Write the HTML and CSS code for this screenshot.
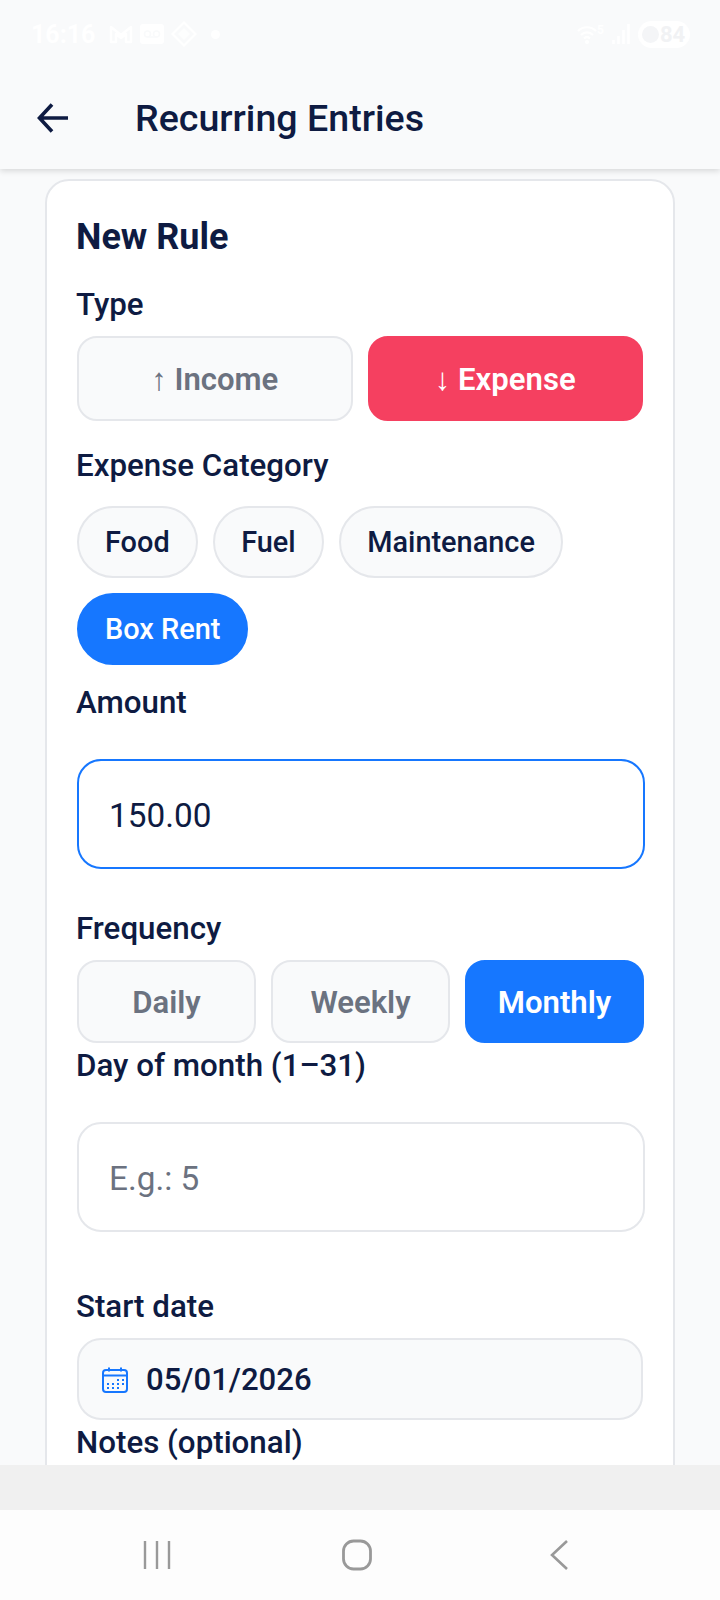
FILE: index.html
```html
<!DOCTYPE html>
<html lang="en">
<head>
    <meta charset="UTF-8">
    <meta name="viewport" content="width=device-width, initial-scale=1.0">
    <link rel="stylesheet" href="styles.css">
    <title>Recurring Entries</title>
</head>
<body>
    <div class="app">
        <header class="topbar">
            <div class="status">
                <div class="status-left">
                    <span class="clock">16:16</span>
                    <svg width="24" height="20" viewBox="0 0 24 20"><path d="M2 18V3l10 8 10-8v15h-5V10l-5 4-5-4v8z" fill="none" stroke="#fff" stroke-width="2.400" stroke-linejoin="round"/></svg>
                    <svg width="24" height="20" viewBox="0 0 24 20"><rect width="24" height="20" rx="3" fill="#fff"/><circle cx="7.500" cy="10" r="3" fill="none" stroke="#f9fafb" stroke-width="1.600"/><circle cx="16.500" cy="10" r="3" fill="none" stroke="#f9fafb" stroke-width="1.600"/><path d="M7.500 13h9" stroke="#f9fafb" stroke-width="1.600"/></svg>
                    <svg width="26" height="26" viewBox="0 0 26 26"><path d="M13 1.500 24.500 13 13 24.500 1.500 13z" fill="none" stroke="#fff" stroke-width="2.200"/><path d="M13 7l6 6-6 6-6-6z" fill="#fff" opacity="0.7"/></svg>
                    <span class="dot"></span>
                </div>
                <div class="status-right">
                    <span class="wifi">
                        <svg width="20" height="20" viewBox="0 0 20 20"><path d="M1 7c5-5 13-5 18 0M4 11c3.500-3.500 8.500-3.500 12 0M7 14.500c2-2 4-2 6 0" fill="none" stroke="#fff" stroke-width="2.200"/><circle cx="10" cy="18" r="2" fill="#fff"/></svg>
                        <span class="wifi-band">5</span>
                    </span>
                    <svg width="18" height="20" viewBox="0 0 18 20"><path d="M1.500 20v-4M6.500 20v-8M11.500 20V6M16.500 20V0" stroke="#fff" stroke-width="2.600"/></svg>
                    <span class="battery"><span class="battery-dot"></span>84</span>
                </div>
            </div>
            <div class="titlebar">
                <svg width="32" height="30" viewBox="0 0 32 30"><path d="M15 1.500 2.500 15 15 28.500M3 15H31" fill="none" stroke="#0e1b42" stroke-width="3.600"/></svg>
                <h1 class="title">Recurring Entries</h1>
            </div>
        </header>

        <main class="content">
            <section class="card">
                <h2 class="card-title">New Rule</h2>

                <div class="label label-type">Type</div>
                <div class="seg seg-type">
                    <button class="seg-btn">↑ Income</button>
                    <button class="seg-btn seg-red">↓ Expense</button>
                </div>

                <div class="label label-cat">Expense Category</div>
                <div class="chips">
                    <button class="chip">Food</button>
                    <button class="chip">Fuel</button>
                    <button class="chip">Maintenance</button>
                    <button class="chip chip-on">Box Rent</button>
                </div>

                <div class="label label-amount">Amount</div>
                <input class="field field-focus" value="150.00">

                <div class="label label-freq">Frequency</div>
                <div class="seg seg-freq">
                    <button class="seg-btn">Daily</button>
                    <button class="seg-btn">Weekly</button>
                    <button class="seg-btn seg-blue">Monthly</button>
                </div>

                <div class="label">Day of month (1–31)</div>
                <input class="field" placeholder="E.g.: 5">

                <div class="label label-start">Start date</div>
                <div class="date">
                    <svg width="26" height="26" viewBox="0 0 26 26"><rect x="1" y="3" width="24" height="22" rx="3" fill="none" stroke="#1677ff" stroke-width="2"/><path d="M1 8.500h24M7 0.500v4M19 0.500v4" stroke="#1677ff" stroke-width="2"/><path d="M15 13h2M20 13h2M5 17h2M10 17h2M15 17h2M20 17h2M5 21h2M10 21h2M15 21h2" stroke="#1677ff" stroke-width="2.200"/></svg>
                    <span>05/01/2026</span>
                </div>

                <div class="label">Notes (optional)</div>
                <input class="field">
            </section>
        </main>

        <div class="strip"></div>
        <nav class="navbar">
            <svg width="28" height="30" viewBox="0 0 28 30"><path d="M2 1v28M14 1v28M26 1v28" stroke="#999" stroke-width="2.400"/></svg>
            <svg class="nav-home" width="30" height="32" viewBox="0 0 30 32"><rect x="1.500" y="2" width="27" height="28" rx="10" fill="none" stroke="#999" stroke-width="2.800"/></svg>
            <svg width="20" height="32" viewBox="0 0 20 32"><path d="M18 2 3 16l15 14" fill="none" stroke="#999" stroke-width="2.600"/></svg>
        </nav>
    </div>
</body>
</html>
```

FILE: styles.css
```css
* {
    box-sizing: border-box;
}

body {
    margin: 0;
    font-family: Roboto, "Noto Sans", sans-serif;
    color: #0e1b42;
}

.app {
    display: flex;
    flex-direction: column;
    width: 720px;
    height: 1600px;
    background-color: #f9fafb;
    overflow: hidden;
}

/* top area */
.topbar {
    position: relative;
    z-index: 2;
    height: 169px;
    flex-shrink: 0;
    background-color: #f9fafb;
    box-shadow: 0 2px 6px rgba(0, 0, 0, 0.14);
}

.status {
    display: flex;
    justify-content: space-between;
    align-items: center;
    height: 68px;
    padding: 0 30px 0 31px;
}

.status-left,
.status-right {
    display: flex;
    align-items: center;
    gap: 7px;
}

.clock {
    font-size: 25px;
    font-weight: 700;
    color: #fff;
    margin-right: 7px;
}

.dot {
    width: 9px;
    height: 9px;
    margin-left: 7px;
    border-radius: 50%;
    background-color: #fff;
}

.wifi {
    display: flex;
    align-items: flex-start;
    width: 28px;
}

.wifi-band {
    font-size: 12px;
    line-height: 12px;
    font-weight: 700;
    color: #fff;
}

.battery {
    display: flex;
    align-items: center;
    gap: 1px;
    width: 52px;
    height: 27px;
    margin-left: 1px;
    padding-left: 4px;
    border-radius: 14px;
    background-color: #fff;
    color: #f1f2f4;
    font-size: 22px;
    font-weight: 700;
}

.battery-dot {
    width: 17px;
    height: 17px;
    border-radius: 50%;
    background-color: #f4f5f7;
}

.titlebar {
    display: flex;
    align-items: center;
    height: 99px;
    padding-left: 37px;
}

.title {
    margin: 0 0 0 66px;
    font-size: 37.600px;
    font-weight: 500;
}

/* form card, cut off by the bottom strip */
.content {
    flex: 1;
    min-height: 0;
    overflow: hidden;
    padding: 10px 45px 0;
}

.card {
    padding: 34px 30px 40px;
    background-color: #fff;
    border: 2px solid #e5e7eb;
    border-radius: 24px;
}

.card-title {
    margin: 0 0 0 -1px;
    font-size: 36px;
    line-height: 44px;
    font-weight: 700;
}

.label {
    margin-left: -1px;
    font-size: 31.300px;
    line-height: 46px;
    font-weight: 500;
}

.label-type { margin-top: 23px; }
.label-cat { margin-top: 22px; }
.label-amount { margin-top: 15px; }
.label-freq { margin-top: 37px; }
.label-start { margin-top: 52px; }

.seg {
    display: flex;
    gap: 15px;
    margin-top: 8px;
}

.seg-btn {
    flex: 1;
    padding: 2px 0 0;
    background-color: #f9fafb;
    border: 2px solid #e5e7eb;
    font-family: inherit;
    font-size: 31.100px;
    font-weight: 600;
    color: #6b7280;
    border-radius: 20px;
}

.seg-type .seg-btn {
    height: 85px;
}

.seg-freq {
    width: 567px;
}

.seg-freq .seg-btn {
    height: 83px;
}

.seg-red {
    background-color: #f54060;
    border-color: #f54060;
    color: #fff;
}

.seg-blue {
    background-color: #1677ff;
    border-color: #1677ff;
    color: #fff;
}

.chips {
    display: flex;
    flex-wrap: wrap;
    gap: 15px 15.500px;
    margin-top: 17px;
}

.chip {
    height: 72px;
    padding: 0 26px;
    background-color: #f9fafb;
    border: 2px solid #e5e7eb;
    border-radius: 36px;
    font-family: inherit;
    font-size: 28.900px;
    font-weight: 500;
    color: #0e1b42;
}

.chip-on {
    background-color: #1677ff;
    border-color: #1677ff;
    color: #fff;
}

.field {
    display: block;
    width: 568px;
    height: 110px;
    margin-top: 33px;
    padding: 2px 30px 0;
    background-color: #fff;
    border: 2px solid #e5e7eb;
    border-radius: 24px;
    font-family: inherit;
    font-size: 33.300px;
    color: #0e1b42;
    outline: none;
}

.field::placeholder {
    color: #6b7280;
    opacity: 1;
}

.field-focus {
    border-color: #1677ff;
}

.date {
    display: flex;
    align-items: center;
    gap: 18px;
    width: 566px;
    height: 82px;
    margin-top: 8px;
    padding: 1px 0 0 23px;
    background-color: #f9fafb;
    border: 2px solid #e5e7eb;
    border-radius: 24px;
    font-size: 31.100px;
    font-weight: 500;
}

/* bottom */
.strip {
    height: 45px;
    flex-shrink: 0;
    background-color: #f0f0f0;
}

.navbar {
    display: flex;
    justify-content: space-between;
    align-items: center;
    height: 90px;
    flex-shrink: 0;
    padding: 0 151px 0 143px;
    background-color: #fdfdfd;
}

.nav-home {
    margin-right: 7px;
}
```
